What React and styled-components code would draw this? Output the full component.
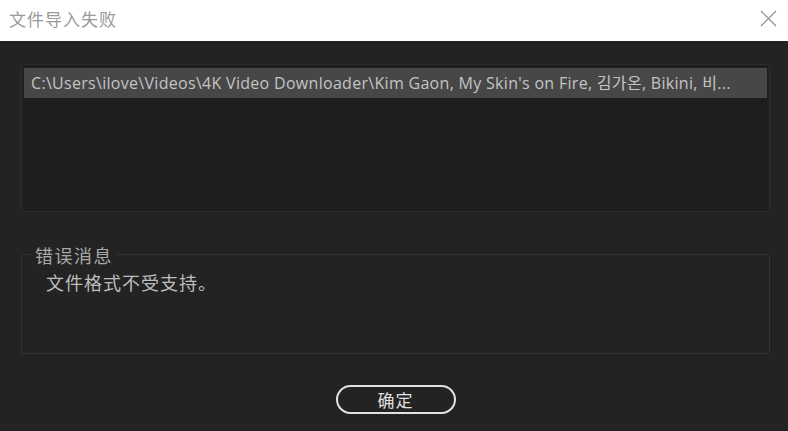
import React from "react";
import styled, { createGlobalStyle } from "styled-components";

const Global = createGlobalStyle`
html, body {
  margin: 0;
  padding: 0;
  background: #232323;
}
body {
  font-family: "Open Sans", "Noto Sans", "Noto Sans CJK SC", "Noto Sans CJK KR", sans-serif;
}
`

const Dialog = styled.div`
width: 788px;
height: 431px;
display: flex;
flex-direction: column;
background: #232323;
overflow: hidden;
`

const TitleBar = styled.div`
height: 41px;
background: #ffffff;
display: flex;
align-items: center;
justify-content: space-between;
padding: 0 10px 0 9px;
box-sizing: border-box;
`

const Title = styled.div`
font-family: "Noto Sans CJK SC", sans-serif;
font-size: 17px;
letter-spacing: 1px;
color: #9a9a9a;
margin-top: -4px;
`

const Close = styled.div`
width: 20px;
height: 20px;
display: flex;
align-items: center;
justify-content: center;
margin-top: -4px;
`

const Body = styled.div`
flex: 1;
display: flex;
flex-direction: column;
padding: 23px 18px 0 21px;
`

const ListBox = styled.div`
height: 148px;
background: #1e1e1e;
border: 1px solid #2e2e2e;
border-radius: 3px;
padding: 3px 2px;
box-sizing: border-box;
`

const Row = styled.div`
height: 30px;
background: ${p => (p.selected ? "#474747" : "transparent")};
color: #c4c4c4;
font-size: 16px;
letter-spacing: 0.3px;
line-height: 30px;
padding-left: 7px;
white-space: nowrap;
overflow: hidden;
`

const Group = styled.div`
position: relative;
margin-top: 42px;
height: 100px;
border: 1px solid #333333;
border-radius: 3px;
box-sizing: border-box;
padding: 16px 24px;
`

const Legend = styled.div`
position: absolute;
top: -11px;
left: 9px;
padding: 0 3px 0 4px;
background: #232323;
font-family: "Noto Sans CJK SC", sans-serif;
font-size: 18px;
letter-spacing: 1.5px;
line-height: 22px;
color: #a8a8a8;
`

const Message = styled.div`
font-family: "Noto Sans CJK SC", sans-serif;
font-size: 18px;
letter-spacing: 1px;
line-height: 22px;
color: #bdbdbd;
`

const Footer = styled.div`
display: flex;
justify-content: center;
padding-top: 31px;
`

const Button = styled.button`
width: 120px;
height: 29px;
border: 2px solid #e2e2e2;
border-radius: 15px;
background: transparent;
color: #e0e0e0;
font-family: "Noto Sans CJK SC", sans-serif;
font-size: 17px;
letter-spacing: 1px;
padding: 0;
line-height: 24px;
`

export default function App() {
  return (
    <>
      <Global />
      <Dialog>
        <TitleBar>
          <Title>文件导入失败</Title>
          <Close>
            <svg width="17" height="17" viewBox="0 0 17 17">
              <path d="M1 1 L16 16 M16 1 L1 16" stroke="#8a8a8a" strokeWidth="1.2" fill="none" />
            </svg>
          </Close>
        </TitleBar>
        <Body>
          <ListBox>
            <Row selected>
              C:\Users\ilove\Videos\4K Video Downloader\Kim Gaon, My Skin's on Fire, 김가온, Bikini, 비...
            </Row>
          </ListBox>
          <Group>
            <Legend>错误消息</Legend>
            <Message>文件格式不受支持。</Message>
          </Group>
          <Footer>
            <Button>确定</Button>
          </Footer>
        </Body>
      </Dialog>
    </>
  );
}
